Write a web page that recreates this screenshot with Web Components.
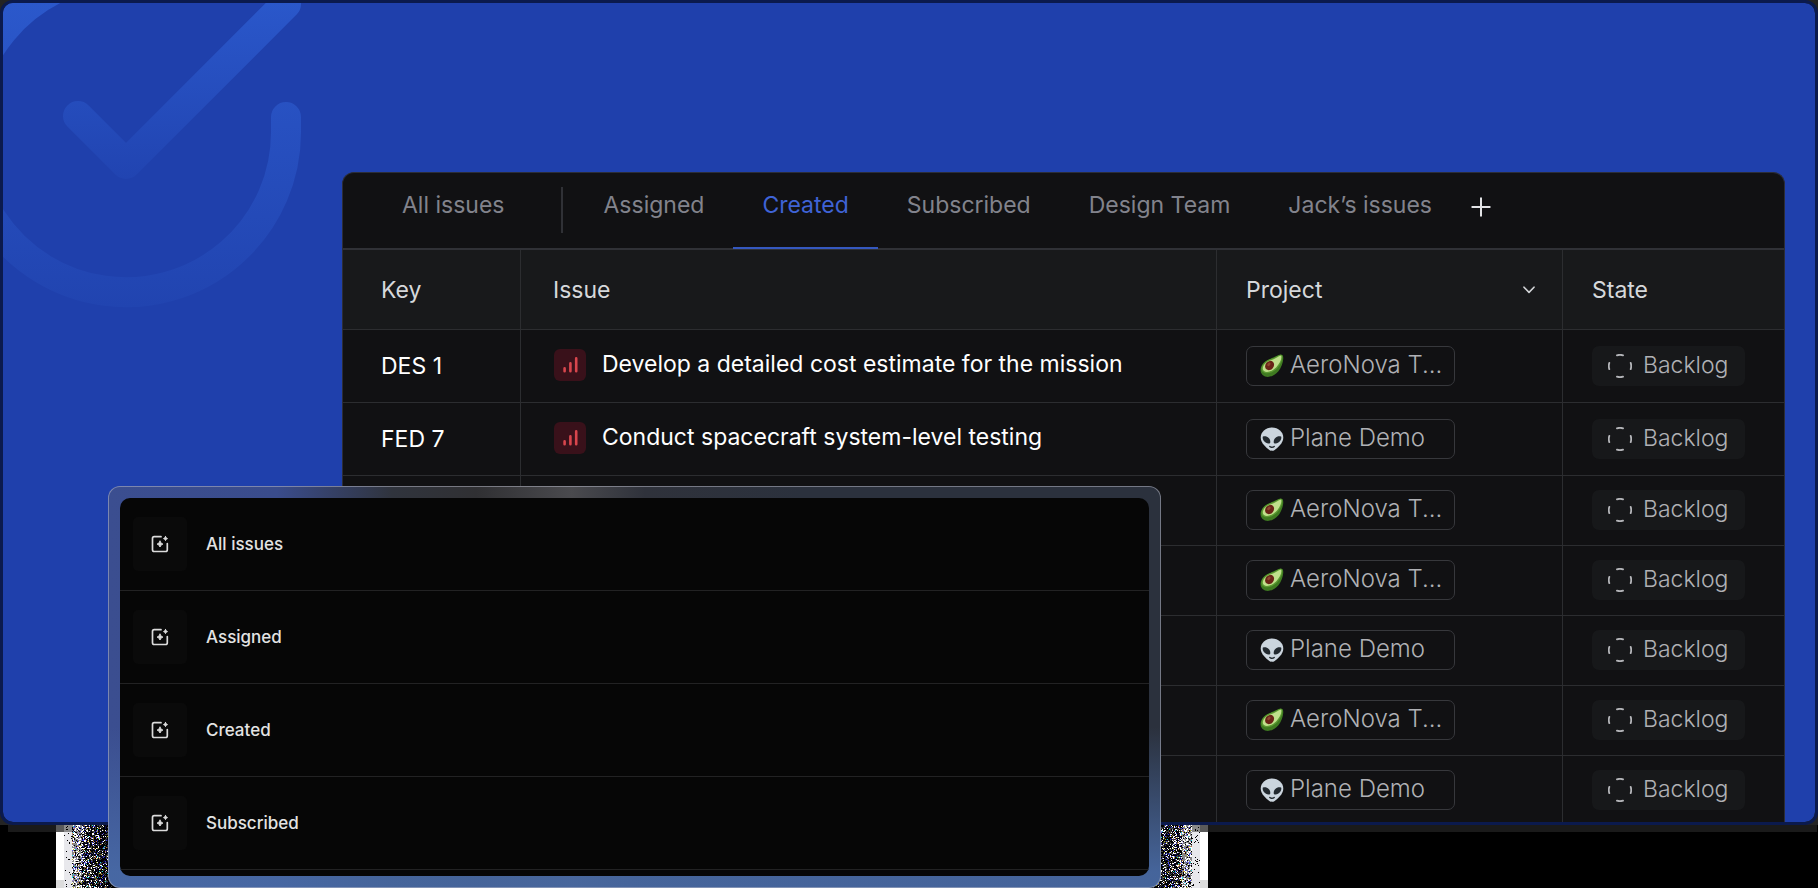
<!DOCTYPE html>
<html lang="en">
<head>
<meta charset="utf-8">
<title>Issue views</title>
<style>
  html { background: #000; }
  body { margin: 0; font-family: Inter, "Liberation Sans", sans-serif; }
</style>
</head>
<body>
<feature-scene>
  <issue-board slot="board"></issue-board>
  <view-menu slot="menu">
    <view-item>All issues</view-item>
    <view-item>Assigned</view-item>
    <view-item>Created</view-item>
    <view-item>Subscribed</view-item>
  </view-menu>
</feature-scene>

<script>
const define = (name, html, setup) => {
  const template = document.createElement('template');
  template.innerHTML = html;
  customElements.define(name, class extends HTMLElement {
    constructor() {
      super();
      this.attachShadow({ mode: 'open' }).append(template.content.cloneNode(true));
    }
    connectedCallback() {
      if (setup) setup(this, this.shadowRoot);
    }
  });
};

/* Large faded check-in-circle mark in the card's corner */
define('check-mark', `
<style>
  :host { display: block; pointer-events: none; }
  svg { display: block; }
</style>
<svg width="310" height="310" viewBox="0 0 310 310" fill="none" stroke-width="30" stroke-linecap="round" stroke-linejoin="round" aria-hidden="true">
  <defs>
    <linearGradient id="ring" gradientUnits="userSpaceOnUse" x1="0" y1="0" x2="0" y2="304">
      <stop offset="0" stop-color="#2b58cb"/><stop offset="1" stop-color="#2144b0"/>
    </linearGradient>
    <linearGradient id="tick" gradientUnits="userSpaceOnUse" x1="0" y1="0" x2="0" y2="176">
      <stop offset="0" stop-color="#2a57ca"/><stop offset="1" stop-color="#2144b1"/>
    </linearGradient>
  </defs>
  <path stroke="url(#ring)" d="M283 114V129A160 160 0 1 1 188 -17"/>
  <path stroke="url(#tick)" d="M75 113L123 161L283 1"/>
</svg>`);

/* Band of random pixels that fades from white at its outer edge */
define('noise-edge', `
<style>
  :host { display: block; }
  :host([flip]) canvas { transform: scaleX(-1); }
  canvas { display: block; }
</style>
<canvas width="56" height="63"></canvas>`, (host, root) => {
  const canvas = root.querySelector('canvas');
  const ctx = canvas.getContext('2d');
  let seed = host.hasAttribute('flip') ? 97 : 41;
  const rnd = () => (seed = (seed * 16807) % 2147483647) / 2147483647;
  const tints = ['#5050ff', '#3838d8', '#b0b020', '#20d8e0', '#c87838', '#a090d8'];
  for (let y = 0; y < 63; y++) {
    for (let x = 0; x < 56; x++) {
      const t = x / 52;
      let fill;
      const r = rnd();
      if (x < 8) fill = y < 7 ? '#5a5a5a' : y > 54 ? '#dcdcdc' : '#fff';
      else if (x < 16) fill = r < 0.05 ? '#000' : y < 7 ? '#8a8a8a' : '#e8e8ec';
      else if (r < 0.1) fill = tints[Math.floor(rnd() * tints.length)];
      else if (r < 0.14 + 0.42 * (1 - t)) fill = '#fff';
      else if (x < 26) fill = r < 0.85 ? '#858588' : '#000';
      else fill = r > 0.8 ? '#45453c' : r > 0.7 ? '#0c0c48' : '#000';
      ctx.fillStyle = fill;
      ctx.fillRect(x, y, 1, 1);
    }
  }
});

define('feature-scene', `
<style>
  :host { display: block; position: relative; min-height: 888px; overflow: hidden; box-sizing: border-box; }
  .card { position: relative; border: 3px solid #0b1a4d; border-radius: 13px; background: #1f40ac; background-clip: padding-box; overflow: hidden; padding: 169px 30px 0 339px; }
  .base { background: #242424; }
  .strip { height: 7px; margin-left: 8px; margin-right: 1px; background: #1a1a1a; }
  check-mark { position: absolute; left: 0; top: 0; }
  .board { position: relative; }
  .menu { position: absolute; top: 486px; left: 108px; right: 657px; }
  noise-edge { position: absolute; top: 825px; }
  .west { left: 56px; }
  .east { right: 610px; }
</style>
<div class="base"><div class="card">
  <check-mark></check-mark>
  <div class="board"><slot name="board"></slot></div>
</div></div>
<div class="strip"></div>
<noise-edge class="west"></noise-edge>
<noise-edge class="east" flip></noise-edge>
<div class="menu"><slot name="menu"></slot></div>`);

/* Tabs */
define('view-tab', `
<style>
  :host { display: block; }
  button { display: block; height: 76px; box-sizing: border-box; margin: 0; padding: 0 29px 9px; border: 0; border-bottom: 2px solid transparent; background: none; color: #82838c; font: 400 23px/29px Inter, "Liberation Sans", sans-serif; white-space: nowrap; cursor: pointer; }
  :host([current]) button { color: #3f63d6; border-color: #3558bf; }
</style>
<button type="button"><slot></slot></button>`);

define('priority-badge', `
<style>
  :host { display: block; width: 32px; height: 32px; border-radius: 6px; background: #39111a; flex: none; }
  svg { display: block; }
</style>
<svg width="32" height="32" viewBox="0 0 32 32" stroke="#d8464d" stroke-width="2.6" stroke-linecap="round" aria-hidden="true">
  <path d="M10.6 19.4V22.2M16.4 14.4V22.2M22.2 9.4V22.2"/>
</svg>`);

const avocado = `
<svg width="24" height="24" viewBox="0 0 24 24" aria-hidden="true">
  <path d="M22.6 1.2C24.5 4 22.3 12.5 18.2 17.6C13.9 22.9 6.5 24.6 2.6 21C-1 17.6 .3 11.3 5.2 7.6C9.4 4.4 12 4.7 15.2 2.6C18 .9 21.2 -.6 22.6 1.2Z" fill="#3f7a21"/>
  <path d="M22 1.3C23.3 3.7 21.3 9.9 17.3 14.2C13.2 18.6 6.7 20.9 3 18.1C-.2 15.4 1.8 10.4 6.2 7.2C9.8 4.6 12.7 4.9 15.6 3C18.3 1.2 21 -.1 22 1.3Z" fill="#5b9a32"/>
  <path d="M21.2 2.1C22 4.2 20 9.3 16.3 13.2C12.5 17.2 6.8 19.2 4 17C1.4 14.8 3.3 10.7 7 8.1C10.3 5.8 13.2 5.9 16 4C18.3 2.5 20.5 1 21.2 2.1Z" fill="#c0e08c"/>
  <ellipse cx="9.6" cy="11.5" rx="5" ry="4.1" transform="rotate(-50 9.6 11.5)" fill="#6a2417"/>
  <ellipse cx="8.9" cy="10.4" rx="2" ry="1.3" transform="rotate(-45 8.9 10.4)" fill="#8f4630"/>
</svg>`;

const alien = `
<svg width="24" height="24" viewBox="0 0 24 24" aria-hidden="true">
  <path d="M12 .5C18.3 .5 23.3 4.8 23.3 10.7C23.3 16 17.5 20.8 14.7 22.9C13 24.1 11 24.1 9.3 22.9C6.5 20.8 .7 16 .7 10.7C.7 4.8 5.7 .5 12 .5Z" fill="#cbd5de"/>
  <path d="M2.7 9.7C6.2 8.2 10.5 10.9 10.3 15.2C10.2 16.2 9.5 16.6 8.5 16.5C4.9 16.1 2.3 13 2.7 9.7Z" fill="#22292f"/>
  <path d="M21.3 9.7C17.8 8.2 13.5 10.9 13.7 15.2C13.8 16.2 14.5 16.6 15.5 16.5C19.1 16.1 21.7 13 21.3 9.7Z" fill="#22292f"/>
  <path d="M9.8 19.4C11 20.6 13 20.6 14.2 19.4" fill="none" stroke="#22292f" stroke-width="1.4" stroke-linecap="round"/>
</svg>`;

define('project-chip', `
<style>
  :host { display: flex; align-items: center; gap: 6px; box-sizing: border-box; width: 209px; height: 40px; padding: 0 13px; border: 1px solid #37383c; border-radius: 7px; color: #b0b1b5; font-size: 24px; font-weight: 300; white-space: nowrap; }
  .mark { flex: none; width: 24px; height: 24px; }
  .name { line-height: 28px; padding-bottom: 3px; }
</style>
<span class="mark"></span><span class="name"><slot></slot></span>`, (host, root) => {
  root.querySelector('.mark').innerHTML = host.getAttribute('kind') === 'alien' ? alien : avocado;
});

define('state-chip', `
<style>
  :host { display: flex; align-items: center; gap: 11px; box-sizing: border-box; width: 153px; height: 40px; padding: 0 16px; border-radius: 7px; background: #17181a; color: #b0b1b5; font-size: 23px; font-weight: 300; white-space: nowrap; }
  svg { display: block; flex: none; }
  .name { line-height: 28px; padding-bottom: 3px; }
</style>
<svg width="24" height="24" viewBox="0 0 24 24" fill="none" stroke="#b4b5b9" stroke-width="1.8" stroke-linecap="round" aria-hidden="true">
  <path d="M8.9 1.3Q12 .3 15.1 1.3M8.9 22.7Q12 23.7 15.1 22.7M1.3 8.9Q.3 12 1.3 15.1M22.7 8.9Q23.7 12 22.7 15.1"/>
</svg><span class="name"><slot></slot></span>`);

const issues = [
  ['DES 1', 'Develop a detailed cost estimate for the mission', 'avocado'],
  ['FED 7', 'Conduct spacecraft system-level testing', 'alien'],
  ['', '', 'avocado'],
  ['', '', 'avocado'],
  ['', '', 'alien'],
  ['', '', 'avocado'],
  ['', '', 'alien'],
];
const row = ([key, title, kind]) => `
<tr${key ? '' : ' class="compact"'}>
  <td class="key">${key}</td>
  <td class="issue">${title ? `<div class="title"><priority-badge></priority-badge><span>${title}</span></div>` : ''}</td>
  <td><project-chip kind="${kind}">${kind === 'alien' ? 'Plane Demo' : 'AeroNova T...'}</project-chip></td>
  <td><state-chip>Backlog</state-chip></td>
</tr>`;

define('issue-board', `
<style>
  :host { display: block; border: 1px solid #2b2d38; border-bottom: 0; border-radius: 12px 12px 0 0; background: #111113; overflow: hidden; font-size: 23px; }
  nav { display: flex; align-items: flex-start; height: 75px; padding-left: 30px; border-bottom: 2px solid #303136; }
  .rule { width: 2px; height: 46px; margin: 14px 11px 0 28px; background: #303136; }
  .add { display: grid; place-items: center; width: 40px; height: 40px; margin: 14px 0 0; padding: 0; border: 0; background: none; }
  table { width: 100%; table-layout: fixed; border-collapse: separate; border-spacing: 0; }
  th, td { box-sizing: border-box; padding: 0 0 0 29px; text-align: left; vertical-align: top; border-right: 1px solid #2c2d30; border-bottom: 1px solid #2c2d30; }
  th:last-child, td:last-child { border-right: 0; }
  th { height: 80px; vertical-align: middle; background: #18191b; color: #d6d8db; font-weight: 400; line-height: 30px; }
  td { height: 73px; padding-top: 16px; }
  .compact td { height: 70px; padding-top: 14px; }
  .compact:last-child td { height: 66px; border-bottom: 0; }
  th:first-child, .key { padding-left: 38px; }
  .issue, th:nth-child(2) { padding-left: 32px; }
  .key { color: #fff; line-height: 40px; }
  .title { display: flex; align-items: center; gap: 16px; padding: 3px 0 0 1px; color: #fff; line-height: 32px; white-space: nowrap; }
  .title span { margin-top: -2px; }
  .sort { display: flex; align-items: center; justify-content: space-between; padding-right: 27px; }
  .sort button { display: block; margin: 0; padding: 0; border: 0; background: none; }
  svg { display: block; }
</style>
<nav aria-label="Issue views">
  <view-tab>All issues</view-tab>
  <div class="rule"></div>
  <view-tab>Assigned</view-tab>
  <view-tab current>Created</view-tab>
  <view-tab>Subscribed</view-tab>
  <view-tab>Design Team</view-tab>
  <view-tab>Jack’s issues</view-tab>
  <button class="add" type="button" aria-label="Add view">
    <svg width="20" height="20" viewBox="0 0 20 20" stroke="#e2e3e6" stroke-width="2" stroke-linecap="round"><path d="M10 1.3V18.7M1.3 10H18.7"/></svg>
  </button>
</nav>
<table>
  <colgroup><col style="width:178px"><col><col style="width:346px"><col style="width:221px"></colgroup>
  <thead><tr>
    <th scope="col">Key</th>
    <th scope="col">Issue</th>
    <th scope="col"><div class="sort">Project<button type="button" aria-label="Sort by project"><svg width="12" height="8" viewBox="0 0 12 8" fill="none" stroke="#d3d5d8" stroke-width="1.6" stroke-linecap="round" stroke-linejoin="round"><path d="M1 1.2L6 6.4L11 1.2"/></svg></button></div></th>
    <th scope="col">State</th>
  </tr></thead>
  <tbody>${issues.map(row).join('')}</tbody>
</table>`);

/* Floating list of views in a frosted frame */
define('view-menu', `
<style>
  :host { display: block; box-sizing: border-box; padding: 11px; border: 1px solid rgba(190, 192, 205, .5); border-radius: 12px;
    background:
      linear-gradient(to bottom, rgba(72, 106, 165, 0) 60%, rgba(72, 106, 165, .9) 96%),
      linear-gradient(to right, #3b4e90 0, #3a4c8c 16%, #30343d 27%, #303033 35%, #4a4a4e 44%, #2f323b 51%, #2b313d 66%, #2b313d 100%);
    background-origin: border-box; }
  .list { padding-bottom: 6px; border-radius: 10px; background: #060606; overflow: hidden; }
</style>
<div class="list"><slot></slot></div>`);

define('view-item', `
<style>
  :host { display: block; border-bottom: 1px solid #222223; }
  button { display: flex; align-items: center; gap: 19px; width: 100%; height: 92px; margin: 0; padding: 0 13px 1px; border: 0; background: none; color: #e3e3e3; font: 500 17px/24px Inter, "Liberation Sans", sans-serif; text-align: left; }
  .tile { display: grid; place-items: center; width: 54px; height: 54px; border-radius: 5px; background: #0a0a0a; }
  svg { display: block; }
</style>
<button type="button">
  <span class="tile"><svg width="20" height="20" viewBox="0 0 20 20" fill="none" stroke="#dcdcdc" stroke-width="1.7" stroke-linecap="round" stroke-linejoin="round" aria-hidden="true">
    <path d="M11 2.7H4.200Q2.500 2.700 2.500 4.400V15.800Q2.500 17.500 4.200 17.500H15.600Q17.300 17.500 17.300 15.800V9.600"/>
    <path d="M10 7.200Q10.500 9.600 12.900 10.100Q10.500 10.600 10 13Q9.500 10.600 7.100 10.100Q9.500 9.600 10 7.200Z" fill="#dcdcdc" stroke-width="1"/>
    <path d="M15.500 2.600Q15.800 4.300 17.500 4.600Q15.800 4.900 15.500 6.600Q15.200 4.900 13.500 4.600Q15.200 4.300 15.500 2.600Z" fill="#dcdcdc" stroke-width="1"/>
  </svg></span>
  <span><slot></slot></span>
</button>`);
</script>
</body>
</html>
